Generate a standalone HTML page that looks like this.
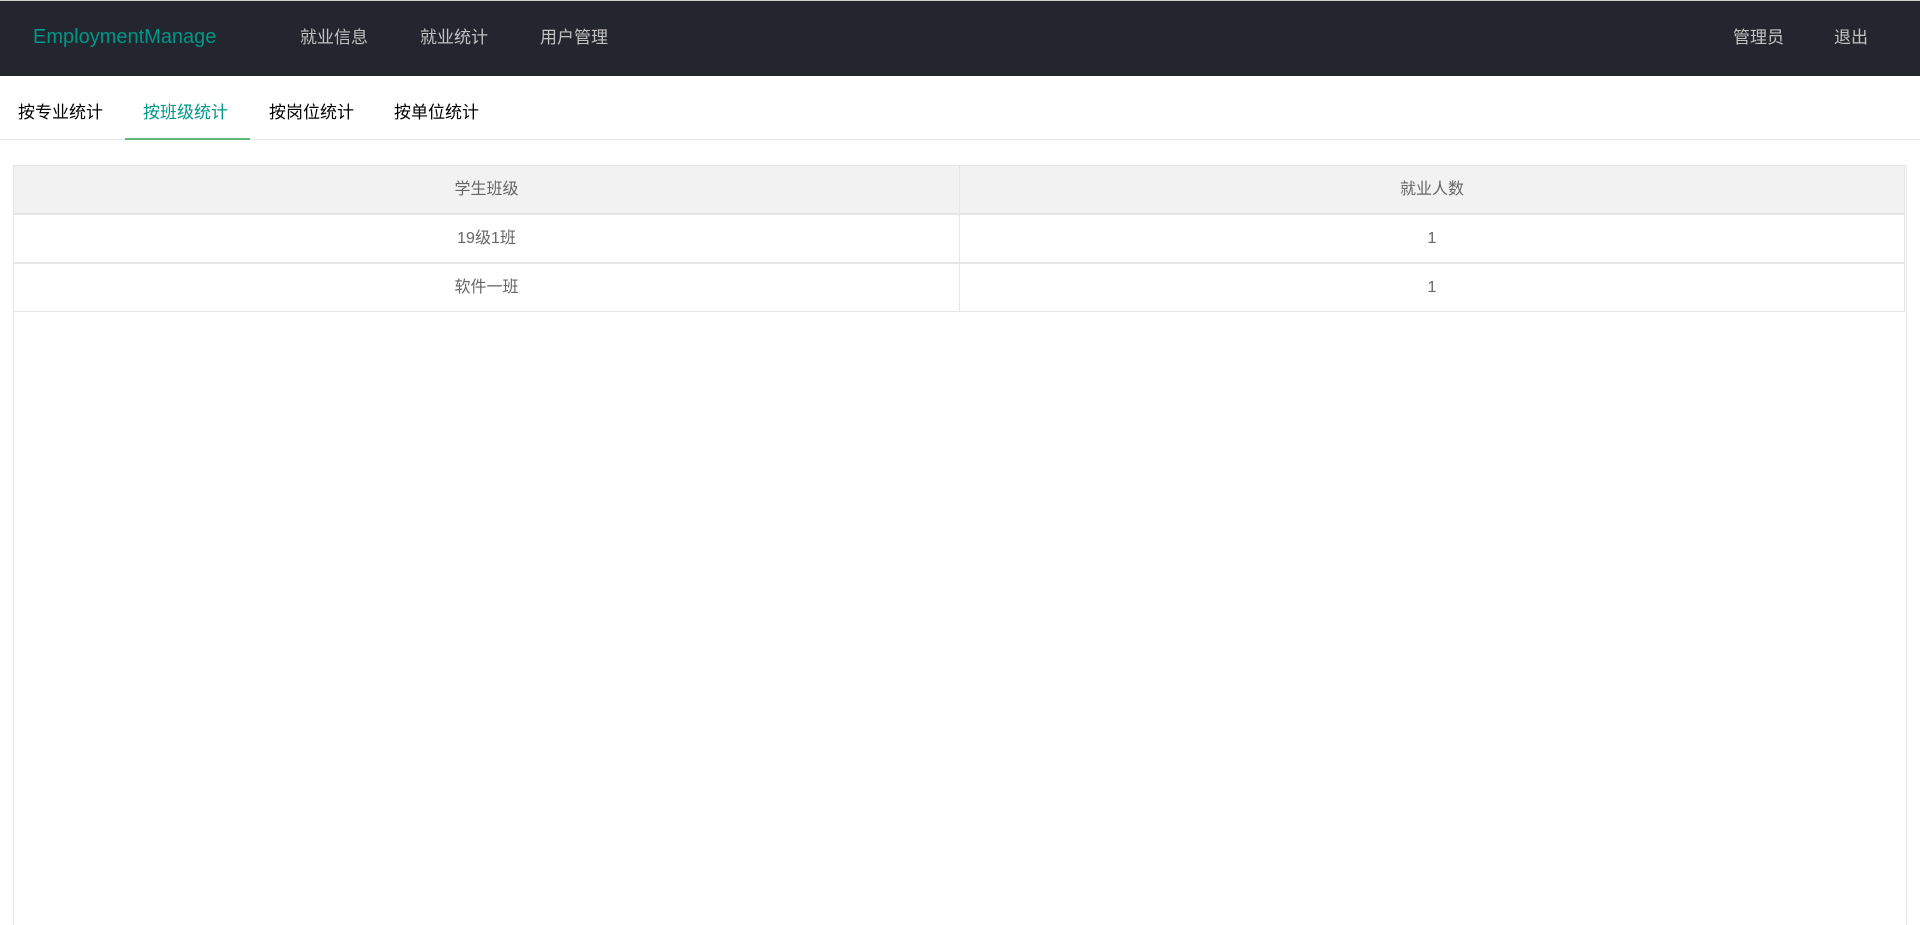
<!DOCTYPE html>
<html><head><meta charset="utf-8"><style>
*{margin:0;padding:0;box-sizing:border-box}
body{width:1920px;height:902px;overflow:hidden;background:#fff;font-family:"Liberation Sans","Noto Sans CJK SC",sans-serif;position:relative}
.hd{position:absolute;left:0;top:1px;width:1920px;height:75px;background:#23262e}
.topline{position:absolute;top:0;left:0;width:1920px;height:1px;background:#ccc}
.hd span{position:absolute;top:26px;font-size:17px;color:#c2c2c2;line-height:22px}
.logo{color:#009688!important;font-size:20px!important}
.tabs span{position:absolute;top:102px;font-size:17px;color:#000;line-height:22px}
.sep{position:absolute;top:139px;left:0;width:1920px;height:1px;background:#e6e6e6}
.ul{position:absolute;top:138px;left:125px;width:125px;height:2px;background:#5FB878}
.box{position:absolute;left:13px;top:165px;width:1894px;height:760px;border:1px solid #e6e6e6;border-bottom:0}
.row{position:absolute;left:13px;width:1892px;height:49px;border:1px solid #e6e6e6;font-size:16px;color:#666}
.row div{position:absolute;top:0;width:945px;height:47px;line-height:47px;text-align:center}
.row .c2{left:945px;border-left:1px solid #e6e6e6}
</style></head><body>
<div class="topline"></div>
<div class="hd">
<span class="logo" style="left:33px;top:25px">EmploymentManage</span>
<span style="left:300px">就业信息</span>
<span style="left:420px">就业统计</span>
<span style="left:540px">用户管理</span>
<span style="left:1733px">管理员</span>
<span style="left:1834px">退出</span>
</div>
<div class="tabs">
<span style="left:18px">按专业统计</span>
<span style="left:143px;color:#009688">按班级统计</span>
<span style="left:269px">按岗位统计</span>
<span style="left:394px">按单位统计</span>
</div>
<div class="sep"></div><div class="ul"></div>
<div class="box"></div>
<div class="row" style="top:165px;background:#f2f2f2"><div>学生班级</div><div class="c2">就业人数</div></div>
<div class="row" style="top:214px"><div>19级1班</div><div class="c2">1</div></div>
<div class="row" style="top:263px"><div>软件一班</div><div class="c2">1</div></div>
</body></html>
